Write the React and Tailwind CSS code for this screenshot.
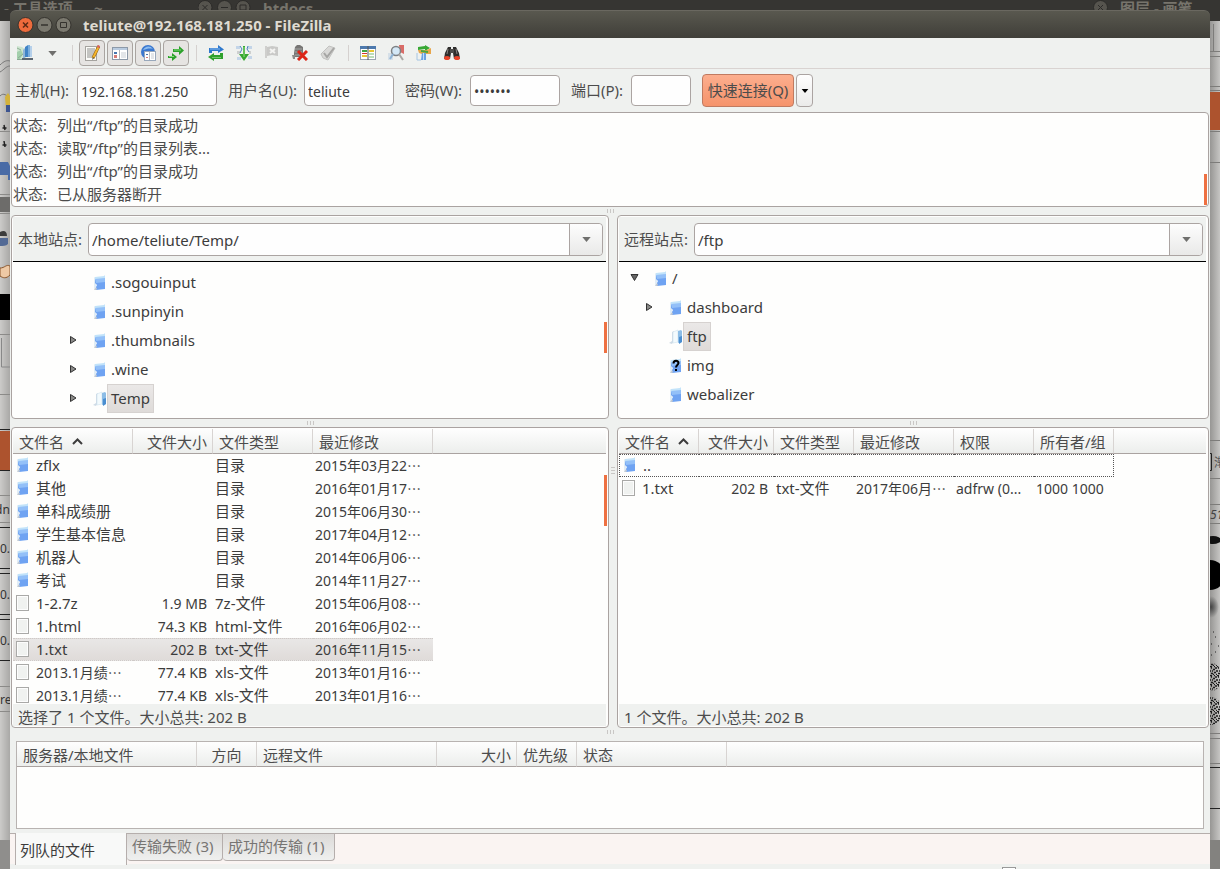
import { useState } from "react";
import clsx from "clsx";

const logLines = [
  "列出“/ftp”的目录成功",
  "读取“/ftp”的目录列表...",
  "列出“/ftp”的目录成功",
  "已从服务器断开",
];

const localTree = [
  { name: ".sogouinput" },
  { name: ".sunpinyin" },
  { name: ".thumbnails", arrow: "right" },
  { name: ".wine", arrow: "right" },
  { name: "Temp", arrow: "right", icon: "open", selected: true },
];

const remoteTree = [
  { name: "/", arrow: "down", level: 0 },
  { name: "dashboard", arrow: "right", level: 1 },
  { name: "ftp", icon: "open", selected: true, level: 1 },
  { name: "img", icon: "unknown", level: 1 },
  { name: "webalizer", level: 1 },
];

const localColumns = [
  { title: "文件名", width: "w-[120px]", sorted: true },
  { title: "文件大小", width: "w-[80px]", align: "right" },
  { title: "文件类型", width: "w-[100px]" },
  { title: "最近修改", width: "w-[120px]" },
];

const remoteColumns = [
  { title: "文件名", width: "w-[80px]", sorted: true },
  { title: "文件大小", width: "w-[75px]", align: "right" },
  { title: "文件类型", width: "w-[80px]" },
  { title: "最近修改", width: "w-[100px]" },
  { title: "权限", width: "w-[80px]" },
  { title: "所有者/组", width: "w-[80px]" },
];

const queueColumns = [
  { title: "服务器/本地文件", width: "w-[180px]" },
  { title: "方向", width: "w-[60px]", align: "center" },
  { title: "远程文件", width: "w-[180px]" },
  { title: "大小", width: "w-[80px]", align: "right" },
  { title: "优先级", width: "w-[60px]" },
  { title: "状态", width: "w-[150px]" },
];

const localFiles = [
  { dir: true, cells: ["zflx", "", "目录", "2015年03月22⋯"] },
  { dir: true, cells: ["其他", "", "目录", "2016年01月17⋯"] },
  { dir: true, cells: ["单科成绩册", "", "目录", "2015年06月30⋯"] },
  { dir: true, cells: ["学生基本信息", "", "目录", "2017年04月12⋯"] },
  { dir: true, cells: ["机器人", "", "目录", "2014年06月06⋯"] },
  { dir: true, cells: ["考试", "", "目录", "2014年11月27⋯"] },
  { cells: ["1-2.7z", "1.9 MB", "7z-文件", "2015年06月08⋯"] },
  { cells: ["1.html", "74.3 KB", "html-文件", "2016年06月02⋯"] },
  { cells: ["1.txt", "202 B", "txt-文件", "2016年11月15⋯"], selected: true },
  { cells: ["2013.1月绩⋯", "77.4 KB", "xls-文件", "2013年01月16⋯"] },
  { cells: ["2013.1月绩⋯", "77.4 KB", "xls-文件", "2013年01月16⋯"] },
];

const remoteFiles = [
  { dir: true, cells: ["..", "", "", "", "", ""], focused: true },
  { cells: ["1.txt", "202 B", "txt-文件", "2017年06月⋯", "adfrw (0...", "1000 1000"] },
];

/* ---------- icons ---------- */

function FolderIcon({ type }) {
  if (type === "open") {
    return (
      <svg width="14" height="16" viewBox="0 0 14 16">
        <path d="M0 14l3-2V3l2-1v10l-2 3z" fill="#cfdbe6" />
        <path d="M4 3l5-2v12l-5 1z" fill="#f3fafd" stroke="#cfe2ee" strokeWidth=".6" />
        <path d="M9 2l3-1 1 1v11l-4 1z" fill="#8dbde6" />
        <path d="M10 8l3-1v6l-3 2z" fill="#4b8ed0" />
      </svg>
    );
  }
  return (
    <svg width="14" height="16" viewBox="-1 0 14 16">
      <path d="M0 2l2 1v9l-2 3z" fill="#e1edf6" />
      <path d="M1 2l9-1 1-1v6H1z" fill="#c2e3fa" />
      <path d="M1 5l10-1v10l-9 1V12l1-2-2-2z" fill="#6fa3f2" />
      <path d="M1 4l10-1v4L2 8z" fill="#93c0f8" />
      <path d="M0 15l2-3 1 2-1 1z" fill="#c3cad2" />
      {type === "unknown" && (
        <path d="M3.500 5.500c0-3.500 5-3.500 5-.4C8.500 7 6 7.200 6 9.500M6 11v2" stroke="#000" strokeWidth="2" fill="none" />
      )}
    </svg>
  );
}

function FileIcon() {
  return (
    <svg width="14" height="16" viewBox="0 0 14 16">
      <rect x=".5" y=".5" width="12" height="15" fill="#fdfdfd" stroke="#a9a9a7" />
      <rect x="2" y="2" width="9" height="12" fill="#f0f2f0" />
    </svg>
  );
}

function TreeArrow({ dir }) {
  return (
    <svg width="9" height="9" viewBox="0 0 9 9">
      {dir === "right" && <path d="M1.500 .5v7L7 4z" fill="#8a8a88" stroke="#333" />}
      {dir === "down" && <path d="M1 .5h7L4.500 6.500z" fill="#666" stroke="#333" />}
    </svg>
  );
}

function DownArrow({ color = "#6f6f6d", small }) {
  return (
    <svg width={small ? 8 : 9} height={small ? 4 : 5} viewBox="0 0 10 6">
      <path d="M0 0h10L5 6z" fill={color} />
    </svg>
  );
}

function SvgIcon({ children }) {
  return (
    <svg width="16" height="16" viewBox="0 0 16 16">
      {children}
    </svg>
  );
}

const SiteManagerIcon = () => (
  <SvgIcon>
    <path d="M0 1l5 1 4 3v9H0z" fill="#cde5d0" />
    <path d="M0 7l4-2 2 4-3 5H0z" fill="#a2cfab" />
    <path d="M0 3l4 2M1 13l5-4" stroke="#8fae95" />
    <path d="M6 5l2-2v10H6z" fill="#8fb5d8" />
    <path d="M8 2l3-2v12H8z" fill="#3f83c6" />
    <path d="M11 0h2v12h-2z" fill="#79addd" />
    <path d="M13 1h2v11h-2z" fill="#b5d0ea" />
    <path d="M5 13h11v2H5z" fill="#5b6670" />
    <path d="M0 14h5v1H0z" fill="#8aa893" />
  </SvgIcon>
);

const LogIcon = () => (
  <SvgIcon>
    <rect x="1.500" y="1.500" width="11" height="14" fill="#fbfbf8" stroke="#a5a39f" />
    <path d="M3 4h8M3 6h8M3 8h7M3 10h6M3 12h5" stroke="#8d8d8b" />
    <path d="M15 1l-6 12" stroke="#8a5a10" strokeWidth="3" />
    <path d="M15 1l-6 12" stroke="#f5b52b" strokeWidth="2" />
    <path d="M9 12l-1 3 2-2z" fill="#333" />
    <path d="M14 0l2 1-1 2-2-1z" fill="#d9606a" />
  </SvgIcon>
);

const TreeIcon = () => (
  <SvgIcon>
    <rect x=".5" y="2.500" width="15" height="12" fill="#fff" stroke="#8d99a8" />
    <path d="M1 3h14v2H1z" fill="#b9cbe0" />
    <path d="M7.500 5v9" stroke="#b5b5b5" />
    <path d="M2 7h3v2H2z" fill="#4977ae" />
    <path d="M2 10h3v3H2z" fill="#d77b76" />
    <path d="M9 8h5M9 10h5M9 12h5" stroke="#c8cdd3" />
  </SvgIcon>
);

const RemoteTreeIcon = () => (
  <SvgIcon>
    <circle cx="8" cy="7" r="7" fill="#3b78cf" />
    <path d="M3 5c2-4 7-5 10-1-4-1-6 0-10 1z" fill="#8dbdf1" />
    <rect x="4.500" y="6.500" width="11" height="9" fill="#fff" stroke="#99a8bb" />
    <path d="M9.500 7v8" stroke="#bbb" />
    <path d="M6 9h2v1H6z" fill="#4977ae" />
    <path d="M6 12h2v1H6z" fill="#d77b76" />
    <path d="M11 9h3M11 11h3M11 13h3" stroke="#c8cdd3" />
  </SvgIcon>
);

const QueueIcon = () => (
  <SvgIcon>
    <path d="M5 4h6V1l5 4.500L11 10V7H5z" fill="#2da12c" />
    <path d="M6 5h7" stroke="#83d67d" />
    <path d="M0 11h4V8l5 4-5 4v-3H0z" fill="#2da12c" />
    <path d="M1 11.500h5" stroke="#83d67d" />
  </SvgIcon>
);

const RefreshIcon = () => (
  <SvgIcon>
    <path d="M1 8V3h9V0l6 4.500L10 8V6H4v2z" fill="#2f79cd" />
    <path d="M2 4h10" stroke="#86b9ee" />
    <path d="M15 8v6H6v2l-6-4 6-4v2h6V8z" fill="#2fa12d" />
    <path d="M4 12.500h9" stroke="#73c86d" />
  </SvgIcon>
);

const ProcessIcon = () => (
  <SvgIcon>
    <path d="M0 1h4v3H0zM12 1h4v3h-4zM1 12h4v3H1zM12 11h4v3h-4z" fill="#c3d5e8" />
    <path d="M1 6h3v3H1zM13 6h2v3h-2z" fill="#cdd0cf" />
    <path d="M4 1l2 3-2 4M12 1l-1 3 2 3" stroke="#4983bd" fill="none" />
    <path d="M7 1h2v8h4l-5 7-5-7h4z" fill="#36a733" />
    <path d="M8 2v10" stroke="#8fdc87" />
  </SvgIcon>
);

const CancelIcon = () => (
  <SvgIcon>
    <path d="M1 1h2v12H1z" fill="#cfcfcd" />
    <path d="M3 2l5-1 6 1v9l-6-1-5 1z" fill="#c9c9c7" />
    <path d="M6 4l5 4M11 4L6 8" stroke="#f4f4f2" strokeWidth="2" />
  </SvgIcon>
);

const DisconnectIcon = () => (
  <SvgIcon>
    <path d="M3 2l2-2h3l3 2v10H2V8z" fill="#777674" />
    <path d="M3 4h7M3 7h7M3 10h7" stroke="#a6a5a3" />
    <path d="M0 10h3v4H1z" fill="#8c8b89" />
    <path d="M6 6l9 9M15 6l-9 9" stroke="#dc2517" strokeWidth="3" />
  </SvgIcon>
);

const ReconnectIcon = () => (
  <SvgIcon>
    <path d="M1 9l8-8 6 2-7 12-5-2z" fill="#d9d9d7" stroke="#c2c2c0" />
    <path d="M4 8l3 4 7-9" stroke="#a6a6a4" strokeWidth="2" fill="none" />
  </SvgIcon>
);

const CompareIcon = () => (
  <SvgIcon>
    <rect x=".5" y="1.500" width="15" height="13" fill="#fff" stroke="#9aa4b0" />
    <path d="M0 1h16v3H0z" fill="#4c79ad" />
    <path d="M2 6h5" stroke="#42a443" strokeWidth="2" />
    <path d="M2 8.500h5" stroke="#d8372e" />
    <path d="M2 11h5M9 6h5" stroke="#e8c531" strokeWidth="2" />
    <path d="M9 9h5M9 12h5" stroke="#76bb72" />
    <path d="M8 1v14" stroke="#555" />
  </SvgIcon>
);

const FilterIcon = () => (
  <SvgIcon>
    <path d="M11 0h5v9l-4-2z" fill="#d96c67" />
    <path d="M0 8h5v7H0z" fill="#d6e0e8" />
    <circle cx="8" cy="6" r="4.500" fill="#d4e8f6" stroke="#7d8184" strokeWidth="1.500" />
    <path d="M5 9l-3 5" stroke="#8fb4d6" strokeWidth="2" />
    <path d="M11 9l4 6" stroke="#a9a7a4" strokeWidth="2" />
  </SvgIcon>
);

const SyncIcon = () => (
  <SvgIcon>
    <path d="M2 2l7-1V0l5 3-5 3V4L2 5z" fill="#37a834" />
    <path d="M2 5h9l4-2v6H6L3 8z" fill="#e8a64a" />
    <path d="M5 6l7 1" stroke="#4aa53f" strokeWidth="2" />
    <path d="M1 8v7h4" stroke="#a6c5e3" fill="none" />
    <path d="M6 8h4v7H5z" fill="#6ba1e2" />
    <path d="M7 8h1v7H7z" fill="#c4dcf8" />
  </SvgIcon>
);

const SearchIcon = () => (
  <SvgIcon>
    <path d="M4 2h3v6l-1 6H0l1-6z" fill="#2f2e2d" />
    <path d="M12 2H9v6l1 6h6l-1-6z" fill="#2f2e2d" />
    <path d="M6 4h4v4H6z" fill="#4d4c4a" />
    <path d="M4 4L3 9M12 4l1 5" stroke="#85827f" />
    <ellipse cx="3" cy="13" rx="3" ry="2" fill="#e8442a" />
    <ellipse cx="13" cy="13" rx="3" ry="2" fill="#e8442a" />
  </SvgIcon>
);

/* ---------- small parts ---------- */

function Separator() {
  return (
    <div className="flex w-3 justify-center">
      <div className="h-4 w-px bg-[#d5d1cf]" />
    </div>
  );
}

function ToolButton({ label, children }) {
  return (
    <button type="button" aria-label={label} className="flex h-[26px] w-7 items-center justify-center">
      {children}
    </button>
  );
}

function ToggleButton({ label, children }) {
  const [on, setOn] = useState(true);
  return (
    <button
      type="button"
      aria-label={label}
      aria-pressed={on}
      onClick={() => setOn(!on)}
      className={clsx(
        "mx-px flex h-[26px] w-[26px] items-center justify-center rounded border",
        on ? "border-[#a9a4a0] bg-[#e6e4e2]" : "border-transparent"
      )}
    >
      {children}
    </button>
  );
}

function QuickField({ id, label, labelWidth, width, ...props }) {
  return (
    <div className="flex items-center">
      <label htmlFor={id} className={clsx("pt-px text-[15px] whitespace-nowrap", labelWidth)}>
        {label}
      </label>
      <input
        id={id}
        className={clsx("h-[31px] rounded border border-[#aba4a2] bg-[#fefefe] px-[3px] pt-px text-[#3c3c3c] outline-none", width)}
        {...props}
      />
    </div>
  );
}

function Grip({ vertical }) {
  return (
    <div className={clsx("flex items-center justify-center gap-[2px]", vertical ? "flex-col" : "h-2")}>
      {[0, 1, 2].map((i) => (
        <span key={i} className={clsx("bg-[#c9c7c5]", vertical ? "h-px w-1" : "h-1 w-px")} />
      ))}
    </div>
  );
}

function SitePanel({ id, label, path, children, thumb }) {
  return (
    <section className="relative flex h-[204px] flex-col rounded border border-[#aaa3a1] bg-[#fefefd] py-px pr-[2px] pl-px">
      <div className="flex h-[45px] shrink-0 items-center border-b border-black bg-[#eff1ef] pr-[3px] pl-[5px]">
        <label htmlFor={id} className="w-[70px] shrink-0 pt-px text-[15px]">
          {label}
        </label>
        <div className="flex h-[33px] min-w-0 flex-1 rounded border border-[#aba4a2] bg-[#fefefe]">
          <input
            id={id}
            defaultValue={path}
            className="min-w-0 flex-1 bg-transparent px-[3px] pt-[3px] text-[15px] text-[#3c3c3c] outline-none"
          />
          <button
            type="button"
            aria-label="▾"
            className="flex w-[33px] items-center justify-center rounded-r border-l border-[#aba4a2] bg-linear-to-b from-[#fdfdfd] to-[#e9e9e8]"
          >
            <DownArrow />
          </button>
        </div>
      </div>
      {children}
      {thumb && <div className="absolute top-[106px] right-px h-[31px] w-[3px] bg-[#ee7142]" />}
    </section>
  );
}

function TreeRow({ item, indent }) {
  return (
    <li className={clsx("flex h-[29px] items-center", indent)}>
      <span className="flex w-[24px] items-center">
        <TreeArrow dir={item.arrow} />
      </span>
      <FolderIcon type={item.icon} />
      <span
        className={clsx(
          "flex h-full items-center px-1 text-[15px] text-[#3c3c3c]",
          item.selected && "bg-linear-to-b from-[#ebe9e8] to-[#dedad8] outline -outline-offset-1 outline-[#d6d2d0]"
        )}
      >
        {item.name}
      </span>
    </li>
  );
}

function TableHead({ columns }) {
  return (
    <thead>
      <tr className="h-[25px]">
        {columns.map((col) => (
          <th
            key={col.title}
            scope="col"
            className={clsx(
              "border-r border-b border-r-[#d8d4d2] border-b-[#aaa3a1] bg-linear-to-b from-[#fefefe] to-[#eceeec] px-[6px] pt-[2px] text-[15px] leading-[22px] font-normal whitespace-nowrap",
              col.width,
              col.align === "right" && "pr-[5px] text-right",
              col.align === "center" && "text-center",
              !col.align && "text-left"
            )}
          >
            {col.title}
            {col.sorted && (
              <svg width="11" height="7" viewBox="0 0 11 7" className="ml-2 inline-block align-[3px]">
                <path d="M1 6l4.500-4.500L10 6" fill="none" stroke="#3c3c3c" strokeWidth="2" />
              </svg>
            )}
          </th>
        ))}
        <td className="border-b border-[#aaa3a1] bg-linear-to-b from-[#fefefe] to-[#eceeec]" />
      </tr>
    </thead>
  );
}

function FilePanel({ label, columns, files, status, thumb }) {
  return (
    <section className="relative flex min-h-0 flex-col rounded border border-[#aaa3a1] bg-[#fefefd] py-px pr-[2px] pl-px">
      <div className="min-h-0 flex-1 overflow-hidden">
        <table aria-label={label} className="w-full table-fixed border-separate border-spacing-0">
          <TableHead columns={columns} />
          <tbody className="text-[#3c3c3c]">
            {files.map((file, row) => (
              <tr key={row} className="h-[23px]">
                {file.cells.map((cell, i) => (
                  <td
                    key={i}
                    className={clsx(
                      "overflow-hidden p-0 leading-[19px] whitespace-nowrap",
                      (i === 2 || (i === 0 && !cell.endsWith("⋯"))) && "text-[15px]",
                      i !== 3 && "pb-px",
                      i > 0 && "pl-[2px]",
                      i === 1 && "pr-[6px] text-right",
                      file.selected && "border-y border-dotted border-[#cfcac8] bg-linear-to-b from-[#e9e7e6] to-[#dfdbd9]",
                      file.focused && "border-y border-dotted border-[#555]",
                      file.focused && i === 0 && "border-l",
                      file.focused && i === columns.length - 1 && "border-r"
                    )}
                  >
                    {i === 0 ? (
                      <span className="flex items-center">
                        <span className="mr-[6px] ml-[3px]">{file.dir ? <FolderIcon /> : <FileIcon />}</span>
                        {cell}
                      </span>
                    ) : (
                      cell
                    )}
                  </td>
                ))}
                <td />
              </tr>
            ))}
          </tbody>
        </table>
      </div>
      <div className="h-[22px] shrink-0 bg-[#eff1ef] px-[5px] text-[15px] leading-[26px]">{status}</div>
      {thumb && <div className="absolute top-[47px] right-px h-[51px] w-[3px] bg-[#ee7142]" />}
    </section>
  );
}

/* ---------- windows behind ---------- */

function BackTitles() {
  return (
    <div className="relative h-[10px] shrink-0 overflow-hidden bg-[#363532] text-[15px] leading-4 font-bold text-[#77746c]">
      <span className="absolute top-0 left-1 whitespace-nowrap">- 工具选项</span>
      <span className="absolute top-0 left-[94px]">~</span>
      <svg className="absolute top-0 left-[198px]" width="54" height="16" viewBox="0 0 54 16">
        <g fill="#56544e" stroke="#2c2b29">
          <circle cx="7" cy="7.500" r="7" />
          <circle cx="26.500" cy="7.500" r="7" />
          <circle cx="45" cy="7.500" r="7" />
        </g>
        <path d="M4.500 5l5 5M9.500 5l-5 5M23 7.500h7M42 5h6v5h-6z" stroke="#2c2b29" fill="none" />
      </svg>
      <span className="absolute top-0 left-[263px]">htdocs</span>
      <svg className="absolute top-0 left-[1093px]" width="16" height="16" viewBox="0 0 16 16">
        <circle cx="7.500" cy="7.500" r="7" fill="#56544e" stroke="#2c2b29" />
        <path d="M5 5l5 5M10 5l-5 5" stroke="#2c2b29" />
      </svg>
      <span className="absolute top-0 left-[1120px] whitespace-nowrap">图层 - 画笔</span>
    </div>
  );
}

function LeftEdge() {
  return (
    <svg className="h-[859px] w-[10px] shrink-0" viewBox="0 10 10 859" fontFamily="Noto Sans" fontSize="12">
      <defs>
        <linearGradient id="edgeL">
          <stop offset="0" stopColor="#cccbc9" />
          <stop offset="1" stopColor="#a9a8a6" />
        </linearGradient>
      </defs>
      <path d="M0 21h10v848H0z" fill="url(#edgeL)" />
      <path d="M0 65c4-4 7-5 10-4M0 72c4-2 6-6 10-6M0 96c4-4 6 0 10 1" stroke="#777" fill="none" />
      <path d="M5 97l3-4 2 3v13H6z" fill="#d4b23a" />
      <path d="M6 105h4v7H6z" fill="#3d5590" />
      <path d="M4 125l1 5M2.500 128h4M4 141l1 6M2.500 145h4" stroke="#222" strokeWidth="1.500" />
      <path d="M0 131.500h10M0 194.500h10M0 213.500h10M0 334.500h10M0 394.500h10M0 495.500h10M0 522.500h10M0 686.500h10M0 711.500h10" stroke="#8b8a88" />
      <path d="M0 162h8l2 4v14H8v-5H0z" fill="#496ba6" />
      <path d="M0 197h10v15H0z" fill="#6d6c6a" />
      <path d="M0 232c4-2 7-1 7 4H0z" fill="#3b3b3b" />
      <path d="M0 238h8v6c-2 2-5 2-8 2z" fill="#536a95" />
      <path d="M0 268c5 0 6-4 10-2v9c-4 4-7 3-10 1z" fill="#eec9a5" stroke="#8a562d" />
      <path d="M0 294h10v26H0z" fill="#000" />
      <path d="M1.500 338v29H10" stroke="#888" fill="none" />
      <path d="M0 431h10v39H0z" fill="#ad532e" />
      <path d="M0 429.500h10M0 470.500h10M0 527.500h10M0 568.500h10M0 573.500h10M0 614.500h10M0 619.500h10M0 660.500h10" stroke="#222" />
      <g fill="#333">
        <text x="-5" y="514">dn</text>
        <text x="0" y="553">0.</text>
        <text x="0" y="599">0.</text>
        <text x="0" y="645">0.</text>
        <text x="0" y="704">re</text>
      </g>
      <path d="M0 840h10v29H0z" fill="#8f8e8c" />
    </svg>
  );
}

function RightEdge() {
  return (
    <svg className="h-[859px] w-[10px] shrink-0" viewBox="0 10 10 859" fontFamily="Noto Sans, Noto Sans CJK SC" fontSize="12">
      <defs>
        <linearGradient id="edgeR">
          <stop offset="0" stopColor="#979694" />
          <stop offset="1" stopColor="#c6c5c3" />
        </linearGradient>
        <radialGradient id="soft">
          <stop offset="0" stopColor="#444" />
          <stop offset="1" stopColor="#444" stopOpacity="0" />
        </radialGradient>
        <pattern id="speckle" width="7" height="9" patternUnits="userSpaceOnUse">
          <path d="M0 .5h2M4 .5h1M1 2h1M5 2h2M3 3.500h2M0 5h1M2 5h1M6 5h1M4 6.500h2M1 7.500h2M6 8.500h1M3 8.500h1" stroke="#1c1c1c" strokeWidth="1.500" />
        </pattern>
      </defs>
      <path d="M0 21h10v848H0z" fill="url(#edgeR)" />
      <path d="M3.500 24v27M0 51.500h10M0 56.500h10M0 86.500h10M0 90.500h10M0 131.500h10M0 162.500h10M0 440.500h10M0 478.500h10M0 504.500h10M0 523.500h10M0 733.500h10M0 738.500h10M0 763.500h10" stroke="#7d7c7a" />
      <path d="M0 92h10v38H0z" fill="#ad532e" />
      <path d="M0 453.500h1.500v17H0M0 767.500h10M0 808.500h10" stroke="#222" fill="none" />
      <text x="4" y="467" fill="#555">渐</text>
      <text x="0" y="519" fill="#444" fontStyle="italic">51</text>
      <ellipse cx="3" cy="540" rx="8" ry="4" fill="#111" />
      <circle cx="0" cy="575" r="15" fill="#000" />
      <ellipse cx="1" cy="607" rx="8" ry="11" fill="url(#soft)" />
      <path d="M3 632h1M5 637h1M8 646h1M1 644h1M5 652h1M1 655h1" stroke="#222" />
      <ellipse cx="1" cy="677" rx="11" ry="14" fill="url(#speckle)" />
      <ellipse cx="1" cy="711" rx="11" ry="14" fill="url(#speckle)" />
      <path d="M0 840h10v29H0z" fill="#83827f" />
    </svg>
  );
}

/* ---------- app ---------- */

export default function App() {
  return (
    <div className="flex h-screen flex-col overflow-hidden bg-[#363532] font-['Noto_Sans','Noto_Sans_CJK_SC',sans-serif] text-sm text-[#4c4c4c]">
      <BackTitles />
      <div className="flex min-h-0 flex-1">
        <LeftEdge />

        <div className="flex min-w-0 flex-1 flex-col">
          <header className="flex h-7 shrink-0 items-center rounded-t-md border-t border-[#6a6860] bg-linear-to-b from-[#59584f] to-[#403f39] pl-[7px]">
            <svg width="56" height="18" viewBox="0 0 56 18">
              <circle cx="8.500" cy="9" r="7.500" fill="#ee6b3c" stroke="#35332e" />
              <path d="M6 6.500l5 5M11 6.500l-5 5" stroke="#5a2a15" strokeWidth="1.500" />
              <circle cx="27.500" cy="9" r="7.500" fill="#7b796f" stroke="#35332e" />
              <path d="M24 9h7" stroke="#35332e" strokeWidth="1.500" />
              <circle cx="46.500" cy="9" r="7.500" fill="#7b796f" stroke="#35332e" />
              <path d="M43.500 6.500h6v5h-6z" stroke="#35332e" fill="none" />
            </svg>
            <h1 className="ml-[10px] text-[15px] leading-5 font-bold text-[#dfdbd2]">teliute@192.168.181.250 - FileZilla</h1>
          </header>

          <main className="flex min-h-0 flex-1 flex-col bg-[#eff1ef]">
            <div className="flex h-[31px] shrink-0 items-center border-b border-[#d9d3d1] pl-px">
              <ToolButton label="站点管理器"><SiteManagerIcon /></ToolButton>
              <button type="button" aria-label="站点" className="flex h-[26px] w-[27px] items-center justify-center">
                <DownArrow />
              </button>
              <Separator />
              <ToggleButton label="消息日志"><LogIcon /></ToggleButton>
              <ToggleButton label="本地目录树"><TreeIcon /></ToggleButton>
              <ToggleButton label="远程目录树"><RemoteTreeIcon /></ToggleButton>
              <ToggleButton label="传输队列"><QueueIcon /></ToggleButton>
              <Separator />
              <ToolButton label="刷新"><RefreshIcon /></ToolButton>
              <ToolButton label="处理队列"><ProcessIcon /></ToolButton>
              <ToolButton label="取消"><CancelIcon /></ToolButton>
              <ToolButton label="断开"><DisconnectIcon /></ToolButton>
              <ToolButton label="重新连接"><ReconnectIcon /></ToolButton>
              <Separator />
              <ToolButton label="目录对比"><CompareIcon /></ToolButton>
              <ToolButton label="过滤器"><FilterIcon /></ToolButton>
              <ToolButton label="同步浏览"><SyncIcon /></ToolButton>
              <ToolButton label="搜索"><SearchIcon /></ToolButton>
            </div>

            <form
              onSubmit={(e) => e.preventDefault()}
              className="flex h-[43px] shrink-0 items-center gap-[11px] pl-[5px]"
            >
              <QuickField id="host" label="主机(H):" labelWidth="w-[62px]" width="w-[140px]" defaultValue="192.168.181.250" />
              <QuickField id="user" label="用户名(U):" labelWidth="w-[76px]" width="w-[90px]" defaultValue="teliute" />
              <QuickField id="pass" label="密码(W):" labelWidth="w-[65px]" width="w-[90px]" type="password" defaultValue="teliute" />
              <QuickField id="port" label="端口(P):" labelWidth="w-[60px]" width="w-[60px]" />
              <div className="flex gap-[2px]">
                <button
                  type="submit"
                  className="h-[33px] w-[92px] rounded border border-[#c07a60] bg-linear-to-b from-[#fcae8e] to-[#f5936b] text-[15px] whitespace-nowrap"
                >
                  快速连接(Q)
                </button>
                <button
                  type="button"
                  aria-label="历史"
                  className="flex h-[33px] w-[17px] items-center justify-center rounded border border-[#aba4a2] bg-linear-to-b from-[#fefefe] to-[#ebebea]"
                >
                  <DownArrow color="#000" small />
                </button>
              </div>
            </form>

            <section className="relative mx-px h-[95px] shrink-0 rounded border border-[#aaa3a1] bg-[#fefefd] pt-px text-[15px]">
              {logLines.map((line, i) => (
                <p key={i} className="flex pl-px leading-[23px]">
                  <span className="w-[44px]">状态:</span>
                  <span>{line}</span>
                </p>
              ))}
              <div className="absolute right-px bottom-px h-[31px] w-[3px] bg-[#ee7142]" />
            </section>

            <Grip />

            <div className="mx-px grid shrink-0 grid-cols-[598fr_592fr] gap-2">
              <SitePanel id="localSite" label="本地站点:" path="/home/teliute/Temp/" thumb>
                <ul className="pt-[6px]">
                  {localTree.map((item) => (
                    <TreeRow key={item.name} item={item} indent="pl-[56px]" />
                  ))}
                </ul>
              </SitePanel>
              <SitePanel id="remoteSite" label="远程站点:" path="/ftp">
                <ul className="pt-[2px]">
                  {remoteTree.map((item) => (
                    <TreeRow key={item.name} item={item} indent={item.level ? "pl-[26px]" : "pl-[11px]"} />
                  ))}
                </ul>
              </SitePanel>
            </div>

            <div className="mx-px grid shrink-0 grid-cols-[598fr_592fr] gap-2">
              <Grip />
              <Grip />
            </div>

            <div className="mx-px grid min-h-0 flex-1 grid-cols-[598fr_8px_592fr] grid-rows-1">
              <FilePanel
                label="本地文件"
                columns={localColumns}
                files={localFiles}
                status="选择了 1 个文件。大小总共: 202 B"
                thumb
              />
              <div className="flex justify-center pt-10">
                <div className="h-2">
                  <Grip vertical />
                </div>
              </div>
              <FilePanel
                label="远程文件"
                columns={remoteColumns}
                files={remoteFiles}
                status="1 个文件。大小总共: 202 B"
              />
            </div>

            <Grip />

            <div className="mx-[6px] mt-[5px] mb-1 h-[88px] shrink-0 border border-[#b8b3b1] bg-[#fefefd]">
              <table aria-label="传输队列" className="w-full table-fixed border-separate border-spacing-0">
                <TableHead columns={queueColumns} />
              </table>
            </div>

            <nav className="flex h-[31px] shrink-0 items-start border-t border-[#b5aeac] bg-[#faf4f2] pl-[5px] text-[15px]">
              <button
                type="button"
                className="-mt-px h-8 w-[112px] border-x border-[#b5aeac] bg-[#f8f9f8] pt-1 pl-1 text-left text-[#3c3c3c]"
              >
                列队的文件
              </button>
              <button
                type="button"
                className="h-[27px] w-[96px] rounded-b border-r border-b border-[#b5aeac] bg-linear-to-b from-[#dcdad8] to-[#eff0ef] pl-[5px] text-left whitespace-nowrap text-[#777573]"
              >
                传输失败 (3)
              </button>
              <button
                type="button"
                className="h-[27px] w-[112px] rounded-b border-r border-b border-[#b5aeac] bg-linear-to-b from-[#dcdad8] to-[#eff0ef] pl-[5px] text-left whitespace-nowrap text-[#777573]"
              >
                成功的传输 (1)
              </button>
            </nav>

            <footer className="flex h-[5px] shrink-0 justify-end overflow-hidden pt-[3px] pr-[194px]">
              <div className="h-4 w-[14px] border border-[#999] bg-white" />
            </footer>
          </main>
        </div>

        <RightEdge />
      </div>
    </div>
  );
}
